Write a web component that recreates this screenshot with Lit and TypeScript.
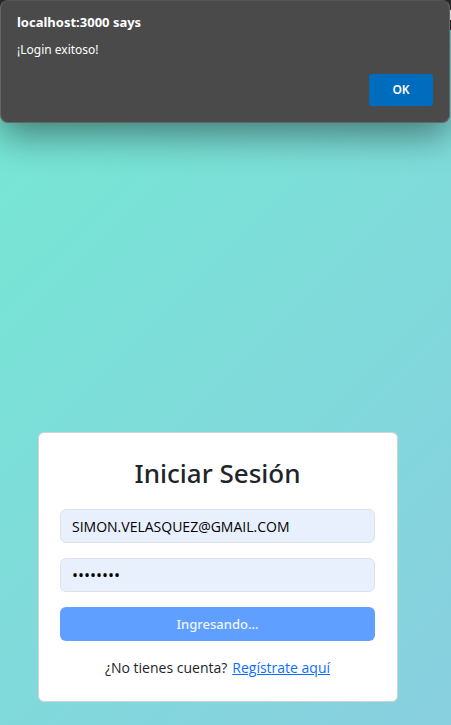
import { LitElement, html, css } from "lit";
import { customElement, state } from "lit/decorators.js";

@customElement("alert-dialog")
class AlertDialog extends LitElement {
  static styles = css`
    :host {
      display: block;
      box-sizing: border-box;
      padding: 13px 16px 16px;
      border: 1px solid #666;
      border-top-color: #555;
      border-radius: 8px;
      background: #4a4a4a;
      color: #fff;
      box-shadow: 0 12px 36px rgba(0, 0, 0, 0.45);
      font: 12px/16px "Noto Sans", "Open Sans", sans-serif;
    }
    .box {
      display: flex;
      flex-direction: column;
    }
    .title {
      margin: 0;
      font-size: 13px;
      line-height: 16px;
      font-weight: 700;
    }
    .message {
      margin: 12px 0 16px;
    }
    .ok {
      align-self: flex-end;
      width: 64px;
      height: 32px;
      border: 0;
      border-radius: 3px;
      background: #006cbe;
      color: #fff;
      font: inherit;
      font-weight: 600;
    }
  `;

  render() {
    return html`
      <div class="box" role="alertdialog" aria-labelledby="title" aria-describedby="message">
        <h1 class="title" id="title">localhost:3000 says</h1>
        <p class="message" id="message">¡Login exitoso!</p>
        <button class="ok" type="button">OK</button>
      </div>
    `;
  }
}

@customElement("login-card")
class LoginCard extends LitElement {
  static styles = css`
    :host {
      display: block;
      padding: 21px 22px 21px 21px;
      border: 1px solid #ced4d4;
      border-radius: 6px;
      background: #fff;
      color: #212529;
      font: 14px/20px "Open Sans", "Noto Sans", sans-serif;
    }
    .title {
      margin: 0 0 17px;
      font-size: 26px;
      line-height: 38px;
      font-weight: 500;
      font-family: "Noto Sans", sans-serif;
      text-align: center;
    }
    .form {
      display: flex;
      flex-direction: column;
      gap: 15px;
    }
    .field {
      box-sizing: border-box;
      width: 100%;
      height: 34px;
      padding: 0 11px;
      border: 1px solid #dee2e6;
      border-radius: 6px;
      background: #e8f0fe;
      color: #000;
      font: inherit;
    }
    .secret {
      font-size: 16px;
    }
    .submit {
      height: 34px;
      border: 0;
      border-radius: 6px;
      background: #5f9fff;
      color: #eff5ff;
      font: inherit;
      font-family: "Noto Sans", sans-serif;
      font-size: 13px;
      font-weight: 500;
    }
    .register {
      display: flex;
      justify-content: center;
      gap: 5px;
      margin: 17px 0 2px;
    }
    .link {
      color: #0d6efd;
    }
  `;

  @state() email = "SIMON.VELASQUEZ@GMAIL.COM";
  @state() password = "password";

  render() {
    return html`
      <h2 class="title">Iniciar Sesión</h2>
      <form class="form">
        <input class="field" type="text" aria-label="Email" .value=${this.email} />
        <input class="field secret" type="password" aria-label="Password" .value=${this.password} />
        <button class="submit" type="submit" disabled>Ingresando...</button>
      </form>
      <p class="register">
        <span>¿No tienes cuenta?</span>
        <a class="link" href="#">Regístrate aquí</a>
      </p>
    `;
  }
}

@customElement("app-root")
class AppRoot extends LitElement {
  static styles = css`
    :host {
      display: flex;
      flex-direction: column;
      position: relative;
      min-height: 100vh;
      overflow: hidden;
    }
    .toolbar {
      display: flex;
      align-items: center;
      justify-content: flex-end;
      height: 30px;
      background: #2b2b2b;
    }
    .tab {
      width: 20px;
      height: 10px;
      background: #eee;
    }
    .page {
      flex: 1;
      display: flex;
      flex-direction: column;
      justify-content: flex-end;
      padding: 0 53px 23px 38px;
      background: linear-gradient(135deg, #74e8d3, #89cfe0);
    }
    .dialog {
      position: absolute;
      top: 0;
      left: 0;
      right: 1px;
    }
  `;

  render() {
    return html`
      <div class="toolbar"><div class="tab"></div></div>
      <main class="page"><login-card></login-card></main>
      <alert-dialog class="dialog"></alert-dialog>
    `;
  }
}
